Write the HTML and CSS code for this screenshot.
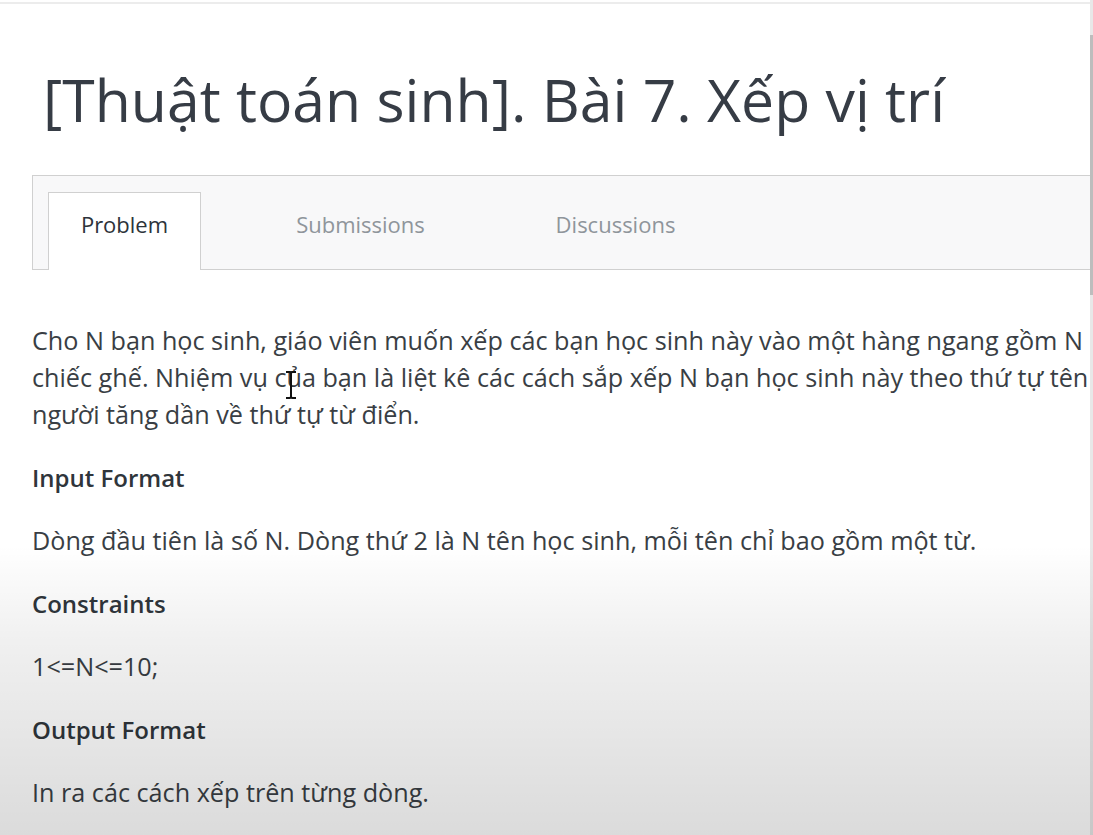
FILE: index.html
```html
<!DOCTYPE html>
<html lang="vi">
<head>
<meta charset="utf-8">
<title>Xếp vị trí</title>
<link rel="stylesheet" href="styles.css">
</head>
<body>
<div class="page">
  <div class="main">
    <div class="topline"></div>
    <h1 class="title">[Thuật toán sinh]. Bài 7. Xếp vị trí</h1>
    <div class="tabs">
      <div class="tab active">Problem</div>
      <div class="tab">Submissions</div>
      <div class="tab">Discussions</div>
    </div>
    <div class="content">
      <p class="text">Cho N bạn học sinh, giáo viên muốn xếp các bạn học sinh này vào một hàng ngang gồm N chiếc ghế. Nhiệm vụ của bạn là liệt kê các cách sắp xếp N bạn học sinh này theo thứ tự tên người tăng dần về thứ tự từ điển.</p>
      <h3 class="head">Input Format</h3>
      <p class="text">Dòng đầu tiên là số N. Dòng thứ 2 là N tên học sinh, mỗi tên chỉ bao gồm một từ.</p>
      <h3 class="head">Constraints</h3>
      <p class="text">1&lt;=N&lt;=10;</p>
      <h3 class="head">Output Format</h3>
      <p class="text">In ra các cách xếp trên từng dòng.</p>
    </div>
  </div>
  <div class="scrollbar"><div class="thumb"></div></div>
</div>
<div class="shade"></div>
<svg class="cursor" width="12" height="28" viewBox="0 0 12 28"><path d="M1 1h4l1 1 1-1h4M6 2v24M1 27h4l1-1 1 1h4" fill="none" stroke="#111" stroke-width="2"/></svg>
</body>
</html>
```
FILE: styles.css
```css
html, body {
  margin: 0;
  padding: 0;
}
body {
  width: 1093px;
  height: 835px;
  overflow: hidden;
  background: #fff;
  font-family: "Open Sans", "Noto Sans", sans-serif;
  color: #39424e;
  position: relative;
}
.page {
  display: flex;
  height: 835px;
}
.main {
  width: 1090px;
  flex: none;
}
.topline {
  height: 2px;
  margin-top: 2px;
  background: #ececec;
}
.title {
  margin: 0;
  padding: 60px 0 0 43px;
  font-size: 58.9px;
  font-weight: 500;
  line-height: 70px;
  color: #363c45;
  white-space: nowrap;
}
.tabs {
  margin-top: 41px;
  margin-left: 32px;
  height: 95px;
  box-sizing: border-box;
  border: 1px solid #d0d0d0;
  border-right: none;
  background: #f8f8f9;
  display: flex;
  align-items: flex-end;
  padding-left: 15px;
}
.tab {
  height: 77px;
  box-sizing: border-box;
  display: flex;
  align-items: center;
  justify-content: center;
  font-size: 22px;
  color: #8f959b;
  padding-bottom: 14px;
  width: 153px;
  margin-right: 83px;
}
.tab.active {
  background: #fff;
  border: 1px solid #d0d0d0;
  border-bottom: none;
  color: #2d333a;
  margin-bottom: -1px;
  height: 78px;
  padding-bottom: 15px;
}
.tab:nth-child(3) {
  margin-left: 19px;
}
.content {
  padding: 52px 0 0 32px;
}
.text {
  margin: 0;
  font-size: 25.2px;
  line-height: 37px;
  color: #393e44;
}
.head {
  margin: 26px 0;
  font-size: 24px;
  font-weight: 600;
  line-height: 37px;
  color: #2f353b;
}
.scrollbar {
  width: 3px;
  background: #e8e8e8;
}
.thumb {
  margin-top: 35px;
  height: 260px;
  background: #bdbdbd;
}
.shade {
  position: absolute;
  left: 0;
  top: 0;
  width: 100%;
  height: 100%;
  pointer-events: none;
  background: linear-gradient(to bottom, rgba(0,0,0,0) 0, rgba(0,0,0,0) 545px, rgba(0,0,0,0.06) 640px, rgba(0,0,0,0.14) 835px);
}
.cursor {
  position: absolute;
  left: 285px;
  top: 371px;
}
```
